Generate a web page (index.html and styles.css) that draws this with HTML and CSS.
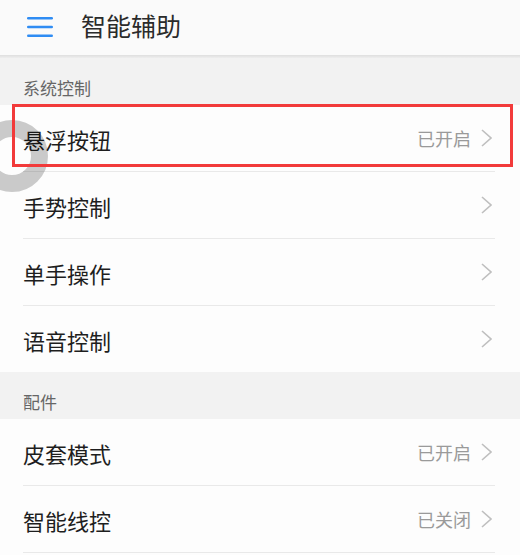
FILE: index.html
```html
<!DOCTYPE html>
<html lang="zh-CN">
<head>
<meta charset="utf-8">
<title>智能辅助</title>
<link rel="stylesheet" href="styles.css">
</head>
<body>
<div class="screen">
  <header class="appbar">
    <svg class="menu" width="26" height="20" viewBox="0 0 26 20" aria-hidden="true">
      <rect x="0" y="0" width="26" height="2.6" rx="1.3" fill="#2f8cf3"/>
      <rect x="0" y="8.7" width="26" height="2.6" rx="1.3" fill="#2f8cf3"/>
      <rect x="0" y="17.4" width="26" height="2.6" rx="1.3" fill="#2f8cf3"/>
    </svg>
    <h1 class="title">智能辅助</h1>
  </header>
  <div class="shadow"></div>

  <div class="section">系统控制</div>
  <ul class="group">
    <li class="row"><span class="label">悬浮按钮</span><span class="right"><span class="status">已开启</span><svg class="chev" width="11" height="18" viewBox="0 0 11 18"><polyline points="1,1 10,9 1,17" fill="none" stroke="#bfbfbf" stroke-width="1.6"/></svg></span></li>
    <li class="row"><span class="label">手势控制</span><span class="right"><svg class="chev" width="11" height="18" viewBox="0 0 11 18"><polyline points="1,1 10,9 1,17" fill="none" stroke="#bfbfbf" stroke-width="1.6"/></svg></span></li>
    <li class="row"><span class="label">单手操作</span><span class="right"><svg class="chev" width="11" height="18" viewBox="0 0 11 18"><polyline points="1,1 10,9 1,17" fill="none" stroke="#bfbfbf" stroke-width="1.6"/></svg></span></li>
    <li class="row last"><span class="label">语音控制</span><span class="right"><svg class="chev" width="11" height="18" viewBox="0 0 11 18"><polyline points="1,1 10,9 1,17" fill="none" stroke="#bfbfbf" stroke-width="1.6"/></svg></span></li>
  </ul>

  <div class="section">配件</div>
  <ul class="group">
    <li class="row"><span class="label">皮套模式</span><span class="right"><span class="status">已开启</span><svg class="chev" width="11" height="18" viewBox="0 0 11 18"><polyline points="1,1 10,9 1,17" fill="none" stroke="#bfbfbf" stroke-width="1.6"/></svg></span></li>
    <li class="row"><span class="label">智能线控</span><span class="right"><span class="status">已关闭</span><svg class="chev" width="11" height="18" viewBox="0 0 11 18"><polyline points="1,1 10,9 1,17" fill="none" stroke="#bfbfbf" stroke-width="1.6"/></svg></span></li>
  </ul>

  <div class="float-ring"></div>
  <div class="highlight"></div>
</div>
</body>
</html>
```

FILE: styles.css
```css
* { box-sizing: border-box; }
html, body {
  margin: 0;
  padding: 0;
  background: #fdfdfd;
}
body {
  font-family: "Noto Sans CJK SC", "Noto Sans", sans-serif;
  width: 520px;
  height: 555px;
  overflow: hidden;
}
.screen {
  position: relative;
  width: 520px;
  height: 555px;
  overflow: hidden;
}
.appbar {
  height: 55px;
  background: #fafafa;
  display: flex;
  align-items: center;
  padding-left: 27px;
}
.menu {
  display: block;
  margin-top: -2px;
}
.title {
  margin: 0 0 0 28px;
  font-size: 25px;
  font-weight: 400;
  color: #2b2b2b;
  line-height: 1;
  margin-top: -4px;
}
.shadow {
  height: 3px;
  background: linear-gradient(#dedede, #eeeeee);
}
.section {
  height: 47px;
  background: #f2f2f2;
  color: #666;
  font-size: 17px;
  line-height: 17px;
  padding: 21px 0 0 23px;
}
.group {
  list-style: none;
  margin: 0;
  padding: 0;
  background: #fdfdfd;
}
.row {
  height: 67px;
  margin: 0 25px 0 23px;
  border-bottom: 1px solid #e9e9e9;
  display: flex;
  align-items: center;
  justify-content: space-between;
}
.row.last { border-bottom: none; height: 66px; }
.label {
  font-size: 22px;
  color: #1e1e1e;
  line-height: 1;
  margin-top: 2px;
}
.right {
  display: flex;
  align-items: center;
  gap: 10px;
  padding-right: 3px;
}
.status {
  font-size: 18px;
  color: #9a9a9a;
  line-height: 1;
}
.chev { display: block; }
.float-ring {
  position: absolute;
  left: -24px;
  top: 120px;
  width: 72px;
  height: 72px;
  border-radius: 50%;
  border: 17px solid rgba(0, 0, 0, 0.2);
  pointer-events: none;
}
.highlight {
  position: absolute;
  left: 12px;
  top: 104px;
  width: 501px;
  height: 63px;
  border: 3px solid #f23a3a;
  pointer-events: none;
}
```
